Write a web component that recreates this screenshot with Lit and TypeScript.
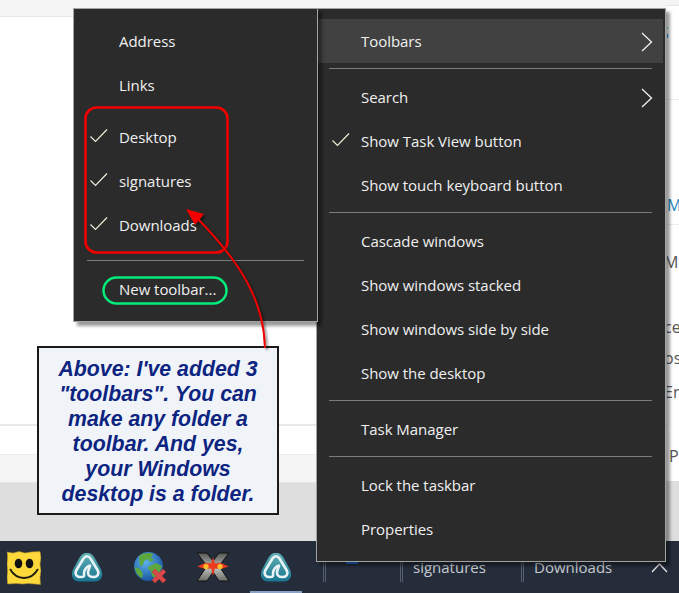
import { LitElement, html, css, svg } from "lit";
import { customElement } from "lit/decorators.js";

const check = html`<svg class="check" width="20" height="16" viewBox="0 0 20 16"><path d="M1.500 8.500l5 5L18 1.500" fill="none" stroke="#eef0dc" stroke-width="1.200"/></svg>`;
const chevron = html`<svg class="chev" width="12" height="20" viewBox="0 0 12 20"><path d="M1 1l9.500 9L1 19" fill="none" stroke="#f0f0f0" stroke-width="1.300"/></svg>`;

const arc = html`<svg width="34" height="34" viewBox="0 0 34 34">
  <defs><linearGradient id="ag" x1="0" y1="0" x2="0" y2="1"><stop offset="0" stop-color="#62b0b6"/><stop offset="1" stop-color="#17748f"/></linearGradient></defs>
  <path d="M17 2c4 0 6 2 8 5.500l6 11c3 6 0 12-6 12H9c-6 0-9-6-6-12l6-11C11 4 13 2 17 2z" fill="url(#ag)"/>
  <path d="M11 26c-5 0-6.500-3.500-4.500-7l7-11.500c2-3 5-3 7 0l7 11.500c2 3.500.5 7-4.500 7-3 0-5-2-5-4.500 0-2.500 2-5.500 2-7-2 0-6 4-6 7.500 0 2.500 1 4-3 4z" fill="none" stroke="#e8f2f4" stroke-width="2.600" stroke-linejoin="round"/>
</svg>`;

const smile = html`<svg width="34" height="34" viewBox="0 0 34 34">
  <path d="M0 1l6 1 6-1.500 6 1.500 6-1 9-.5 1 6-1 7 1 6-1 7 .5 7-6-.5-6-.5-6 .5-6-.5-9 .5-.5-7 .5-6-.5-7 .5-7z" fill="#fdd83a" stroke="#a8892c" stroke-width=".6"/>
  <ellipse cx="11.500" cy="12.500" rx="3.800" ry="4.800" fill="#111"/><ellipse cx="22.500" cy="12.500" rx="3.800" ry="4.800" fill="#111"/>
  <path d="M3 18c4 7 9 9 14 9s10-2 14-9" fill="none" stroke="#1a1a10" stroke-width="1.800"/>
</svg>`;

const globe = html`<svg width="34" height="34" viewBox="0 0 34 34">
  <defs><radialGradient id="gg" cx=".4" cy=".35" r=".7"><stop offset="0" stop-color="#5fb2ea"/><stop offset="1" stop-color="#144f9c"/></radialGradient></defs>
  <circle cx="15.500" cy="15.500" r="14.500" fill="url(#gg)"/>
  <path d="M6 5c4-3 10-4 14-2l-2 4 3 2-4 2-2-3-4 2-1 4-3 1zM15 16l8-4 6 3-3 8-4 4-3-2-1-5-3-2zM2 16l5 2 3 5-1 4C5 25 2 21 2 16z" fill="#5da83e"/>
  <path d="M19 21l3-3 4 4 4-4 3 3-4 4 4 4-3 3-4-4-4 4-3-3 4-4z" fill="#d8474a" stroke="#b33" stroke-width=".5"/>
</svg>`;

const blast = html`<svg width="34" height="34" viewBox="0 0 34 34">
  <defs><linearGradient id="xg" x1="0" y1="0" x2="0" y2="1"><stop offset="0" stop-color="#555"/><stop offset=".55" stop-color="#bdbdb8"/><stop offset="1" stop-color="#6a6a66"/></linearGradient></defs>
  <path d="M1 2h10l6 8 6-8h10l-10 13 10 15H23l-6-9-6 9H1l10-15z" fill="url(#xg)" stroke="#111" stroke-width="1"/>
  <path d="M17 6l1.800 6.500 6-.5 8 3.500-8 2.500-6-.5L17 25l-1.800-7.500-6 .5-8-2.500 8-3.500 6 .5z" fill="#ef3b1d"/>
  <circle cx="10" cy="15.500" r="2.600" fill="#fbc02d"/><circle cx="24" cy="15.500" r="2.600" fill="#fbc02d"/>
</svg>`;

const marks = svg`
  <rect x="85.500" y="107.500" width="142" height="145" rx="11" fill="none" stroke="#f00000" stroke-width="2.600"/>
  <rect x="103.500" y="277.500" width="123" height="26" rx="13" fill="none" stroke="#04ec7c" stroke-width="2.500"/>
  <g class="arrow">
    <path d="M265 348C264 300 240 262 197 218" fill="none" stroke="#f00000" stroke-width="2"/>
    <path d="M186 209L204 214 195 225z" fill="#f00000"/>
  </g>`;

@customElement("app-root")
export class AppRoot extends LitElement {
  static styles = css`
    :host { display: block; position: relative; width: 679px; height: 593px; overflow: hidden; background: #fff; font-family: "Open Sans", "Noto Sans", sans-serif; }
    .page { height: 593px; display: flex; flex-direction: column; }
    .upper { flex: none; height: 541px; display: flex; }
    .main { flex: none; width: 667px; display: flex; flex-direction: column; }
    .top { flex: none; height: 16px; background: #f5f5f5; border-bottom: 1px solid #e6e6e6; }
    .content { flex: none; height: 407px; background: #fff; border-bottom: 2px solid #e9e9e9; }
    .white2 { flex: none; height: 28px; background: #fff; border-bottom: 1px solid #ececec; }
    .strip { flex: none; height: 27px; background: #f5f5f5; border-bottom: 1px solid #e4e4e4; }
    .gray { flex: 1; background: #dedede; }

    .peek { flex: none; width: 12px; overflow: hidden; display: flex; flex-direction: column; font-size: 16px; color: #555; white-space: nowrap; }
    .peek .ptop { flex: none; height: 5px; background: #f5f5f5; border-bottom: 1px solid #e6e6e6; }
    .peek .row { flex: none; height: 22px; line-height: 22px; }
    .peek .pline { flex: none; height: 1px; background: #ececec; }
    .peek .fill { flex: 1; background: #dedede; }
    .peek .s { margin-top: 16px; margin-bottom: 55px; margin-left: -7px; color: #1a86c0; }
    .peek .m { margin-top: 94px; margin-bottom: 8px; color: #1a86c0; }
    .peek .ma { margin-top: 26px; margin-left: -3px; }
    .peek .ce { margin-top: 43px; margin-left: -3px; }
    .peek .os { margin-top: 9px; margin-left: -3px; }
    .peek .en { margin-top: 12px; margin-left: -3px; }
    .peek .p { margin-top: 42px; margin-left: 2px; margin-bottom: 14px; }

    .taskbar { flex: 1; background: #252d3b; display: flex; align-items: flex-start; position: relative; font-size: 15px; }
    .tray { display: flex; align-items: flex-start; padding: 10px 0 0 7px; gap: 30px; }
    .tray > div { width: 33px; height: 34px; }
    .active { position: absolute; left: 250px; bottom: 0; width: 52px; height: 2px; background: #8aa2c6; }
    .tb { position: absolute; top: 21px; height: 20px; width: 1px; border-left: 1px solid #566070; border-right: 1px solid #566070; }
    .lbl { position: absolute; top: 16px; line-height: 20px; color: #c9ccd2; }
    .mark { position: absolute; left: 346px; top: 21px; width: 12px; height: 2px; background: #1565c0; }
    .caret { position: absolute; left: 651px; top: 21px; }

    .menu { position: absolute; top: 8px; box-sizing: border-box; background: #2b2b2b; border: 1px solid #a3a3a3; box-shadow: 4px 4px 3px rgba(0,0,0,.4); padding: 10px 2px 10px 1px; color: #f0f0f0; font-size: 15px; letter-spacing: -.04px; display: flex; flex-direction: column; }
    .left { left: 73px; width: 245px; height: 314px; z-index: 2; }
    .right { left: 316px; width: 350px; height: 554px; z-index: 1; }
    .item { flex: none; height: 44px; display: flex; align-items: center; position: relative; white-space: nowrap; }
    .left .item { padding-left: 44px; }
    .right .item { padding-left: 43px; }
    .item.hl { background: #414141; }
    .check { position: absolute; left: 14px; top: 13px; }
    .right .check { left: 13px; top: 13px; }
    .chev { position: absolute; right: 10px; top: 13px; }
    .sep { flex: none; height: 1px; background: #7c7c7c; margin: 5px 11px 6px 11px; }
    .left .sep { margin: 13px 11px 6px 12px; }
    .gap { flex: none; height: 8px; }

    .note { position: absolute; left: 37px; top: 346px; width: 242px; height: 169px; box-sizing: border-box; background: #f0f4f9; border: 2px solid #1a1a1a; z-index: 3; padding: 9px 0 0; text-align: center; font: italic bold 21.3px/25px "Liberation Sans", Arial, sans-serif; color: #0d2480; white-space: nowrap; }
    .overlay { position: absolute; left: 0; top: 0; z-index: 4; pointer-events: none; }
    .arrow { filter: drop-shadow(2px 2px 1px rgba(0,0,0,.45)); }
  `;

  render() {
    return html`
      <div class="page">
        <div class="upper">
          <div class="main">
            <div class="top"></div>
            <div class="content"></div>
            <div class="white2"></div>
            <div class="strip"></div>
            <div class="gray"></div>
          </div>
          <div class="peek">
            <div class="ptop"></div>
            <div class="row s">S</div>
            <div class="pline"></div>
            <div class="row m">M</div>
            <div class="pline"></div>
            <div class="row ma">Ma</div>
            <div class="row ce">ce</div>
            <div class="row os">os</div>
            <div class="row en">En</div>
            <div class="row p">P</div>
            <div class="fill"></div>
          </div>
        </div>
        <div class="taskbar">
          <div class="tray"><div>${smile}</div><div>${arc}</div><div>${globe}</div><div>${blast}</div><div>${arc}</div></div>
          <div class="active"></div>
          <div class="tb" style="left:323px"></div>
          <div class="mark"></div>
          <div class="tb" style="left:400px"></div>
          <div class="lbl" style="left:413px">signatures</div>
          <div class="tb" style="left:521px"></div>
          <div class="lbl" style="left:534px">Downloads</div>
          <svg class="caret" width="17" height="11" viewBox="0 0 17 11"><path d="M1 10l7.500-8L16 10" fill="none" stroke="#e8e8e8" stroke-width="1.300"/></svg>
        </div>
      </div>

      <div class="menu left">
        <div class="item">Address</div>
        <div class="item">Links</div>
        <div class="gap"></div>
        <div class="item">${check}Desktop</div>
        <div class="item">${check}signatures</div>
        <div class="item">${check}Downloads</div>
        <div class="sep"></div>
        <div class="item">New toolbar...</div>
      </div>

      <div class="menu right">
        <div class="item hl">Toolbars${chevron}</div>
        <div class="sep"></div>
        <div class="item">Search${chevron}</div>
        <div class="item">${check}Show Task View button</div>
        <div class="item">Show touch keyboard button</div>
        <div class="sep"></div>
        <div class="item">Cascade windows</div>
        <div class="item">Show windows stacked</div>
        <div class="item">Show windows side by side</div>
        <div class="item">Show the desktop</div>
        <div class="sep"></div>
        <div class="item">Task Manager</div>
        <div class="sep"></div>
        <div class="item">Lock the taskbar</div>
        <div class="item">Properties</div>
      </div>

      <div class="note">Above: I've added 3<br>"toolbars". You can<br>make any folder a<br>toolbar. And yes,<br>your Windows<br>desktop is a folder.</div>

      <svg class="overlay" width="679" height="593" viewBox="0 0 679 593">${marks}</svg>
    `;
  }
}
